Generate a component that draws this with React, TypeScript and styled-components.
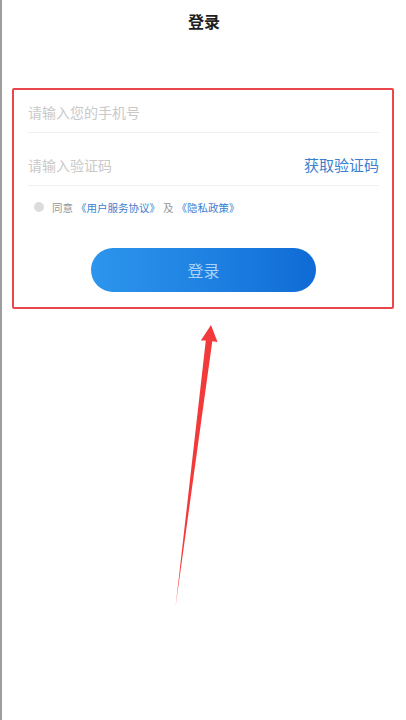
import styled, { createGlobalStyle } from 'styled-components';

const GlobalStyle = createGlobalStyle`
  html, body {
    margin: 0;
    padding: 0;
    background: #ffffff;
  }

  body {
    font-family: "Noto Sans CJK SC", "Noto Sans", sans-serif;
  }

  input::placeholder {
    color: #c9c9c9;
  }
`;

const App: React.FC = () => {
  return (
    <Page>
      <GlobalStyle />
      <Header>
        <Title>登录</Title>
      </Header>

      <Card>
        <Field>
          <Input placeholder="请输入您的手机号" />
        </Field>
        <Field $gap={12}>
          <Input placeholder="请输入验证码" />
          <CodeLink>获取验证码</CodeLink>
        </Field>

        <Agreement>
          <Radio />
          <AgreeText>同意</AgreeText>
          <DocLink>《用户服务协议》</DocLink>
          <AgreeText>及</AgreeText>
          <DocLink>《隐私政策》</DocLink>
        </Agreement>

        <LoginButton>登录</LoginButton>
      </Card>

      <Arrow width="406" height="720" viewBox="0 0 406 720">
        <polygon
          points="211,325 217.5,342 212.3,341.3 175.5,607 205.8,340.6 200.8,340.5"
          fill="#f23a3a"
        />
      </Arrow>
    </Page>
  );
};

const Page = styled.div`
  position: relative;
  width: 100%;
  min-height: 720px;
  box-sizing: border-box;
  border-left: 2px solid #9e9e9e;
  overflow: hidden;
`;

const Header = styled.header`
  height: 42px;
  display: flex;
  align-items: center;
  justify-content: center;
`;

const Title = styled.h1`
  margin: 0;
  color: #1f1f1f;
  font-size: 16px;
  font-weight: 700;
  line-height: 20px;
`;

const Card = styled.section`
  margin: 46px 12px 0 10px;
  padding: 2px 13px 15px 14px;
  border: 2px solid #e9474b;
  border-radius: 2px;
  display: flex;
  flex-direction: column;
`;

const Field = styled.div<{ $gap?: number }>`
  height: 40px;
  margin-top: ${({ $gap }) => $gap ?? 0}px;
  border-bottom: 1px solid #f1f1f1;
  display: flex;
  align-items: center;
  justify-content: space-between;
`;

const Input = styled.input`
  flex: 1;
  min-width: 0;
  border: none;
  outline: none;
  padding: 0;
  background: transparent;
  color: #333333;
  font-family: "Noto Sans CJK SC", sans-serif;
  font-size: 14px;
`;

const CodeLink = styled.span`
  color: #3b7fcf;
  font-size: 15px;
  line-height: 20px;
`;

const Agreement = styled.div`
  margin-top: 14px;
  height: 14px;
  padding-left: 6px;
  display: flex;
  align-items: center;
  gap: 3px;
  font-size: 10.5px;
`;

const Radio = styled.span`
  width: 10px;
  height: 10px;
  margin-right: 5px;
  border-radius: 50%;
  background: #dcdcdc;
`;

const AgreeText = styled.span`
  color: #959595;
`;

const DocLink = styled.span`
  color: #3c80cf;
`;

const LoginButton = styled.button`
  align-self: center;
  margin-top: 34px;
  width: 225px;
  height: 44px;
  border: none;
  border-radius: 22px;
  background: linear-gradient(90deg, #2d95ed 0%, #1f82e2 50%, #0f6bd5 100%);
  color: #a9d2f6;
  font-family: "Noto Sans CJK SC", sans-serif;
  font-size: 16px;
  cursor: pointer;
`;

const Arrow = styled.svg`
  position: absolute;
  top: 0;
  left: -2px;
  pointer-events: none;
`;

export default App;
